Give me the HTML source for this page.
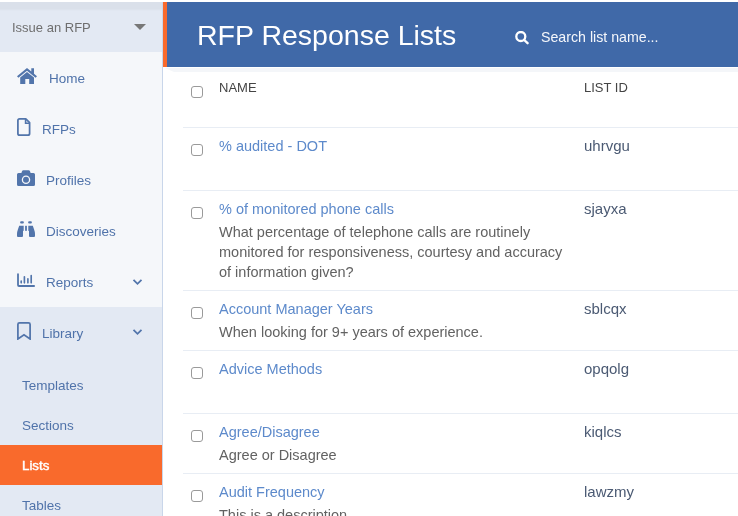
<!DOCTYPE html>
<html><head><meta charset="utf-8">
<style>
*{box-sizing:border-box;margin:0;padding:0}
html,body{width:738px;height:516px;overflow:hidden;background:#fff;font-family:"Liberation Sans",sans-serif}
.abs{position:absolute;white-space:nowrap;will-change:transform}
#side{position:absolute;left:0;top:2px;width:163px;height:514px;background:#f5f7fa;border-right:1px solid #c9d6ea}
#dd{position:absolute;left:0;top:2px;width:162px;height:50px;background:#e3e9f3}
#ddtop{position:absolute;left:0;top:2px;width:162px;height:9px;background:linear-gradient(#dae0ea 75%,#e3e9f3)}
#lib{position:absolute;left:0;top:307px;width:162px;height:209px;background:#e3e9f3}
#active{position:absolute;left:0;top:445px;width:162px;height:40px;background:#f96a2c}
.nav{font-size:13.5px;color:#5073aa;line-height:15px}
#hdr{position:absolute;left:163px;top:2px;width:575px;height:65px;background:#4069a8;border-left:4px solid #f96a2c}
#shadow{position:absolute;left:165px;top:68px;width:573px;height:4px;background:#f4f6f9;clip-path:polygon(0 0,100% 0,100% 100%,9px 100%)}
.sep{position:absolute;left:183px;width:555px;height:1px;background:#e8edf4}
.cb{position:absolute;left:191px;width:12px;height:12px;border:1px solid #9a9a9a;border-radius:3px;background:#fff}
.link{font-size:14.5px;color:#5d8acb;line-height:16px}
.desc{font-size:14.5px;color:#626262;line-height:20px}
.lid{font-size:15px;color:#4b5a73;line-height:16px;margin-top:-1px}
.th{font-size:13px;color:#444;line-height:15px}
</style></head><body>
<div id="side"></div>
<div id="dd"></div>
<div id="ddtop"></div>
<div id="lib"></div>
<div id="active"></div>

<div class="abs nav" style="left:11.5px;top:20px;color:#6e6e6e;font-size:13px">Issue an RFP</div>
<svg class="abs" style="left:134px;top:24px" width="12" height="6" viewBox="0 0 12 6"><path d="M0 0H12L6 6Z" fill="#777"/></svg>

<!-- Home -->
<svg class="abs" style="left:17px;top:68px" width="20" height="16" viewBox="0 0 20 16"><path d="M10 0L0 8.3 1.4 9.8 10 2.8 18.6 9.8 20 8.3 17 5.8V0.3H14.3V3.5Z M3.2 9.5V16H8.3V11H12.2V16H17V9.5L10 3.9Z" fill="#5275ab"/></svg>
<div class="abs nav" style="left:48.5px;top:71px">Home</div>

<!-- RFPs -->
<svg class="abs" style="left:17px;top:118px" width="14" height="18" viewBox="0 0 14 18"><path d="M2.6 0.9H8.8L12.6 4.7V15.4Q12.6 17.1 10.9 17.1H2.6Q0.9 17.1 0.9 15.4V2.6Q0.9 0.9 2.6 0.9Z" fill="none" stroke="#5275ab" stroke-width="1.75" stroke-linejoin="round"/><path d="M8.6 1V5.2H12.6" fill="none" stroke="#5275ab" stroke-width="1.6"/></svg>
<div class="abs nav" style="left:41.5px;top:122px">RFPs</div>

<!-- Profiles -->
<svg class="abs" style="left:17px;top:170px" width="18" height="16" viewBox="0 0 18 16"><path d="M6.3 0.3H11.7Q12.6 0.3 13 1.3L13.6 3H16.5Q18 3 18 4.5V14.5Q18 16 16.5 16H1.5Q0 16 0 14.5V4.5Q0 3 1.5 3H4.4L5 1.3Q5.4 0.3 6.3 0.3Z" fill="#5275ab"/><circle cx="9" cy="9.7" r="3.6" fill="none" stroke="#f5f7fa" stroke-width="1.3"/></svg>
<div class="abs nav" style="left:46.3px;top:173px">Profiles</div>

<!-- Discoveries -->
<svg class="abs" style="left:17px;top:221px" width="18" height="16" viewBox="0 0 18 16"><rect x="3.1" y="0.3" width="3.8" height="2.3" rx="1.1" fill="#5275ab"/><rect x="11.1" y="0.3" width="3.8" height="2.3" rx="1.1" fill="#5275ab"/><rect x="8.1" y="4.8" width="1.8" height="5" fill="#5275ab"/><path d="M2.2 4.8H6.7V9.7L6 10V15Q6 16 5 16H1Q0 16 0 15V12.8Q0 11 0.9 8.5Z" fill="#5275ab"/><path d="M15.8 4.8H11.3V9.7L12 10V15Q12 16 13 16H17Q18 16 18 15V12.8Q18 11 17.1 8.5Z" fill="#5275ab"/></svg>
<div class="abs nav" style="left:46.3px;top:224px">Discoveries</div>

<!-- Reports -->
<svg class="abs" style="left:17px;top:273px" width="18" height="14" viewBox="0 0 18 14"><path d="M1 1.2V12Q1 13 2 13H17.1" fill="none" stroke="#5275ab" stroke-width="1.8" stroke-linecap="round"/><path d="M4.2 8.1V9.8 M7.4 3.7V9.8 M10.9 5.8V9.8 M14.2 2.5V9.8" fill="none" stroke="#5275ab" stroke-width="1.65" stroke-linecap="round"/></svg>
<div class="abs nav" style="left:46.3px;top:275px">Reports</div>
<svg class="abs" style="left:132px;top:277.5px" width="11" height="8" viewBox="0 0 11 8"><path d="M1.5 1.8L5.5 5.8 9.5 1.8" fill="none" stroke="#5275ab" stroke-width="1.8"/></svg>

<!-- Library -->
<svg class="abs" style="left:17px;top:322px" width="14" height="18" viewBox="0 0 14 18"><path d="M0.9 17V2.5Q0.9 0.9 2.5 0.9H11.5Q13.1 0.9 13.1 2.5V17L7 12.7Z" fill="none" stroke="#5275ab" stroke-width="1.75" stroke-linejoin="miter"/></svg>
<div class="abs nav" style="left:41.5px;top:326px">Library</div>
<svg class="abs" style="left:132px;top:328px" width="11" height="8" viewBox="0 0 11 8"><path d="M1.5 1.8L5.5 5.8 9.5 1.8" fill="none" stroke="#5275ab" stroke-width="1.8"/></svg>

<div class="abs nav" style="left:22px;top:378px">Templates</div>
<div class="abs nav" style="left:22px;top:418px">Sections</div>
<div class="abs nav" style="left:22px;top:458px;color:#fff;-webkit-text-stroke:0.45px #fff;font-size:13.3px">Lists</div>
<div class="abs nav" style="left:22px;top:498px">Tables</div>

<!-- header -->
<div id="hdr"></div>
<div id="shadow"></div>
<div class="abs" style="left:197px;top:18px;font-size:28.5px;color:#fff;line-height:34px">RFP Response Lists</div>
<svg class="abs" style="left:515px;top:31px" width="15" height="14" viewBox="0 0 15 14"><circle cx="5.8" cy="5.5" r="4.5" fill="none" stroke="#fff" stroke-width="2.3"/><path d="M9.2 9L12.6 12.2" stroke="#fff" stroke-width="2.4" stroke-linecap="round"/></svg>
<div class="abs" style="left:541px;top:29px;font-size:14.2px;color:#f5f7fb;line-height:17px">Search list name...</div>

<!-- table -->
<div class="cb" style="top:86px"></div>
<div class="abs th" style="left:219px;top:80px">NAME</div>
<div class="abs th" style="left:584px;top:80px">LIST ID</div>
<div class="sep" style="top:127px"></div>

<div class="cb" style="top:144px"></div>
<div class="abs link" style="left:219px;top:138px">% audited - DOT</div>
<div class="abs lid" style="left:584px;top:139px">uhrvgu</div>
<div class="sep" style="top:190px"></div>

<div class="cb" style="top:207px"></div>
<div class="abs link" style="left:219px;top:201px">% of monitored phone calls</div>
<div class="abs desc" style="left:219px;top:222px">What percentage of telephone calls are routinely<br>monitored for responsiveness, courtesy and accuracy<br>of information given?</div>
<div class="abs lid" style="left:584px;top:202px">sjayxa</div>
<div class="sep" style="top:290px"></div>

<div class="cb" style="top:307px"></div>
<div class="abs link" style="left:219px;top:301px">Account Manager Years</div>
<div class="abs desc" style="left:219px;top:322px">When looking for 9+ years of experience.</div>
<div class="abs lid" style="left:584px;top:302px">sblcqx</div>
<div class="sep" style="top:350px"></div>

<div class="cb" style="top:367px"></div>
<div class="abs link" style="left:219px;top:361px">Advice Methods</div>
<div class="abs lid" style="left:584px;top:362px">opqolg</div>
<div class="sep" style="top:413px"></div>

<div class="cb" style="top:430px"></div>
<div class="abs link" style="left:219px;top:424px">Agree/Disagree</div>
<div class="abs desc" style="left:219px;top:445px">Agree or Disagree</div>
<div class="abs lid" style="left:584px;top:425px">kiqlcs</div>
<div class="sep" style="top:473px"></div>

<div class="cb" style="top:490px"></div>
<div class="abs link" style="left:219px;top:484px">Audit Frequency</div>
<div class="abs desc" style="left:219px;top:505px">This is a description</div>
<div class="abs lid" style="left:584px;top:485px">lawzmy</div>
</body></html>
